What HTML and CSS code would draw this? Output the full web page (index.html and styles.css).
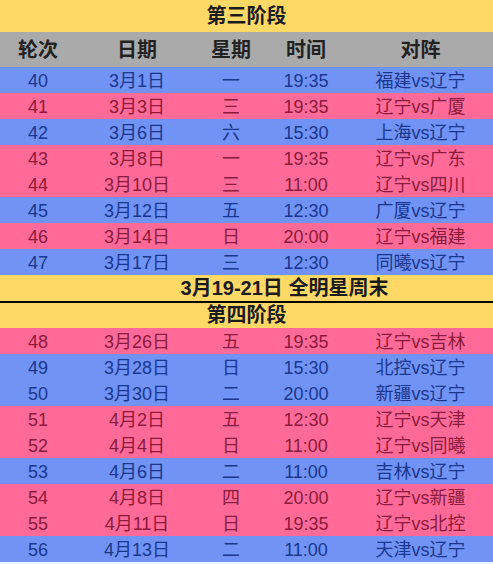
FILE: index.html
```html
<!DOCTYPE html>
<html lang="zh-CN">
<head>
<meta charset="utf-8">
<title>赛程</title>
<link rel="stylesheet" href="styles.css">
</head>
<body>
<div class="sheet">
  <div class="band">第三阶段</div>
  <div class="row head"><span>轮次</span><span>日期</span><span>星期</span><span>时间</span><span>对阵</span></div>
  <div class="row blue"><span>40</span><span>3月1日</span><span>一</span><span>19:35</span><span>福建vs辽宁</span></div>
  <div class="row pink"><span>41</span><span>3月3日</span><span>三</span><span>19:35</span><span>辽宁vs广厦</span></div>
  <div class="row blue"><span>42</span><span>3月6日</span><span>六</span><span>15:30</span><span>上海vs辽宁</span></div>
  <div class="row pink"><span>43</span><span>3月8日</span><span>一</span><span>19:35</span><span>辽宁vs广东</span></div>
  <div class="row pink"><span>44</span><span>3月10日</span><span>三</span><span>11:00</span><span>辽宁vs四川</span></div>
  <div class="row blue"><span>45</span><span>3月12日</span><span>五</span><span>12:30</span><span>广厦vs辽宁</span></div>
  <div class="row pink"><span>46</span><span>3月14日</span><span>日</span><span>20:00</span><span>辽宁vs福建</span></div>
  <div class="row blue"><span>47</span><span>3月17日</span><span>三</span><span>12:30</span><span>同曦vs辽宁</span></div>
  <div class="band allstar">3月19-21日 全明星周末</div>
  <div class="band stage4">第四阶段</div>
  <div class="row pink"><span>48</span><span>3月26日</span><span>五</span><span>19:35</span><span>辽宁vs吉林</span></div>
  <div class="row blue"><span>49</span><span>3月28日</span><span>日</span><span>15:30</span><span>北控vs辽宁</span></div>
  <div class="row blue"><span>50</span><span>3月30日</span><span>二</span><span>20:00</span><span>新疆vs辽宁</span></div>
  <div class="row pink"><span>51</span><span>4月2日</span><span>五</span><span>12:30</span><span>辽宁vs天津</span></div>
  <div class="row pink"><span>52</span><span>4月4日</span><span>日</span><span>11:00</span><span>辽宁vs同曦</span></div>
  <div class="row blue"><span>53</span><span>4月6日</span><span>二</span><span>11:00</span><span>吉林vs辽宁</span></div>
  <div class="row pink"><span>54</span><span>4月8日</span><span>四</span><span>20:00</span><span>辽宁vs新疆</span></div>
  <div class="row pink"><span>55</span><span>4月11日</span><span>日</span><span>19:35</span><span>辽宁vs北控</span></div>
  <div class="row blue"><span>56</span><span>4月13日</span><span>二</span><span>11:00</span><span>天津vs辽宁</span></div>
</div>
</body>
</html>
```

FILE: styles.css
```css
html, body {
  margin: 0;
  padding: 0;
  background: #f2f5fc;
}

.sheet {
  width: 493px;
  display: flex;
  flex-direction: column;
  font-family: "Liberation Sans", "Noto Sans CJK SC", sans-serif;
}

.band {
  background: #ffd866;
  color: #1a1a1a;
  font-weight: bold;
  font-size: 20px;
  height: 32px;
  line-height: 32px;
  text-align: center;
}

.band.allstar {
  height: 26px;
  line-height: 26px;
  padding-left: 76px;
}

.band.stage4 {
  height: 25px;
  line-height: 25px;
  border-top: 2px solid #000;
}

.row {
  display: grid;
  grid-template-columns: 76px 122px 66px 84px 1fr;
  height: 26px;
  line-height: 28px;
  font-size: 18px;
  text-align: center;
}

.row span {
  white-space: nowrap;
}

.row.head {
  height: 35px;
  line-height: 37px;
  background: #aaaaaa;
  color: #222;
  font-weight: bold;
  font-size: 20px;
}

.row.blue {
  background: #7093f5;
  color: #1a3790;
}

.row.pink {
  background: #ff6a98;
  color: #8b1a3c;
}
```
